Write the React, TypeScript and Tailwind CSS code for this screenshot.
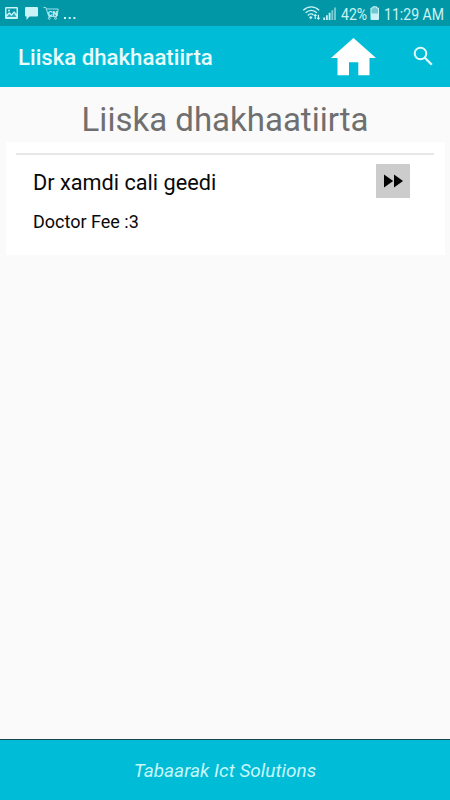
function StatusBar() {
  return (
    <div className="flex h-[26px] shrink-0 items-center justify-between bg-[#0297a7] text-[#c9f3f6]">
      <div className="flex h-full items-center">
        <svg className="ml-[5px] h-[26px] w-[75px]" viewBox="5 0 75 26" fill="none">
          <path fillRule="evenodd" fill="currentColor" d="M6.200 7h10.600A1.200 1.200 0 0 1 18 8.200v9.600a1.200 1.200 0 0 1-1.200 1.200H6.200A1.200 1.200 0 0 1 5 17.800V8.200A1.200 1.200 0 0 1 6.200 7Zm.3 1.500v6.300l2.700-2.800 2.300 2 2.600-3 2.400 3V8.500Z" />
          <path fill="#0297a7" d="m6.500 17 2.800-2.900 2.200 1.900 2.500-2.900 2.500 3.900Z" opacity=".75" />
          <circle cx="9" cy="10.500" r="1" fill="currentColor" />
          <path fill="currentColor" d="M26 7h11a1 1 0 0 1 1 1v7.500a1 1 0 0 1-1 1h-7.500L26.500 20v-3.500H26a1 1 0 0 1-1-1V8a1 1 0 0 1 1-1Z" />
          <path stroke="currentColor" strokeWidth=".8" d="M43.500 7.500h2.300l3 9H57M46.500 9H58.200l-1.200 7" />
          <circle cx="49.300" cy="18.300" r="1" stroke="currentColor" strokeWidth=".8" />
          <circle cx="55.500" cy="18.300" r="1" stroke="currentColor" strokeWidth=".8" />
          <text x="47.700" y="15.600" fontSize="7.500" fontWeight="900" fill="currentColor" textLength="10" lengthAdjust="spacingAndGlyphs">CN</text>
          <path fill="currentColor" d="M64 17h2v2h-2zM68.700 17h2v2h-2zM73.400 17h2v2h-2z" />
        </svg>
      </div>
      <div className="flex h-full items-center">
        <svg className="h-[26px] w-[39px]" viewBox="302 0 39 26" fill="none">
          <g stroke="currentColor" strokeWidth="1.400">
            <path d="M303.300 10.200c4.600-4.500 11.200-4.500 15.800 0" />
            <path d="M305.600 12.800c3.400-3.200 7.800-3.200 11.200 0" />
            <path d="M307.900 15.400c1.800-1.900 4.100-1.900 5.500-.5" />
          </g>
          <path fill="currentColor" d="m309 17.200 1.800-1.200 1.700 1.200-1.700 2.300Z" />
          <path fill="currentColor" d="m315.200 13.700 2 2.300h-1.400v3h-1.200v-3h-1.400ZM318.400 20l-2-2.300h1.400v-3h1.200v3h1.400Z" />
          <path fill="currentColor" d="M323.300 17.500h1.800V20h-1.800zM326 15.200h1.800V20H326zM328.700 12.800h1.800V20h-1.800z" />
          <path fill="currentColor" opacity=".6" d="M331.400 10.200h1.800V20h-1.800zM334.100 7.500h1.800V20h-1.800z" />
        </svg>
        <div className="w-[29px] pt-[3px] text-[16px] leading-none">
          <span className="inline-block origin-left scale-x-[.88] whitespace-nowrap">42%</span>
        </div>
        <svg className="h-[26px] w-[14px]" viewBox="370 0 14 26">
          <path fill="currentColor" opacity=".55" d="M372.500 6.500h4V8h2.200v6h-8V8h1.800Z" />
          <path fill="currentColor" d="M370.500 13.500h8.500V19a1 1 0 0 1-1 1h-6.500a1 1 0 0 1-1-1Z" />
          <path fill="none" stroke="currentColor" strokeWidth="1" d="M371 14V8h2V6.800h3.500V8h2v6" />
        </svg>
        <div className="w-[66px] pt-[3px] text-[16px] leading-none">
          <span className="inline-block origin-left scale-x-[.88] whitespace-nowrap">11:29 AM</span>
        </div>
      </div>
    </div>
  );
}

function AppBar() {
  return (
    <header className="flex h-[61px] shrink-0 items-center bg-[#00bcd6] pl-[18px] text-white">
      <h1 className="w-[313px] pt-[2px] text-[22.2px] font-medium leading-none whitespace-nowrap text-[#e9fdfe]">Liiska dhakhaatiirta</h1>
      <svg className="h-[38px] w-[45px]" viewBox="0 0 45 38" fill="currentColor">
        <path d="M22.500 0 45 20h-6.500v17.300H27.300V24.200h-9.300v13.100H6.500V20H0Z" />
      </svg>
      <svg className="mt-[-1px] ml-[37px] h-[20px] w-[20px]" viewBox="0 0 20 20" fill="none" stroke="#e2fbfd" strokeWidth="2">
        <circle cx="7.500" cy="7.500" r="5.800" />
        <path strokeWidth="2.300" d="m11.800 11.800 7 7" />
      </svg>
    </header>
  );
}

function DoctorCard() {
  return (
    <article className="ml-[6px] mr-[5px] h-[113px] bg-white pt-[11px] text-[#090909]">
      <div className="ml-[10px] mr-[11px] h-[2px] bg-[#e7e7e7]" />
      <div className="mt-[9px] flex h-[34px] items-center justify-between pl-[27px] pr-[35px]">
        <h3 className="pt-[3px] text-[21.7px] leading-none whitespace-nowrap">Dr xamdi cali geedi</h3>
        <button className="flex h-[34px] w-[34px] items-center justify-center bg-[#cccccc]" aria-label="Doctor details">
          <svg className="h-[14px] w-[20px]" viewBox="0 0 20 14" fill="#050505">
            <path d="M1 .6 10.200 7 1 13.400ZM11 .6 20 7l-9 6.400Z" />
          </svg>
        </button>
      </div>
      <p className="mt-[15px] pl-[27px] text-[18px] leading-none">Doctor Fee :3</p>
    </article>
  );
}

export default function App() {
  return (
    <div className="flex h-[800px] w-[450px] flex-col overflow-hidden bg-[#fafafa] font-[Roboto,sans-serif]">
      <StatusBar />
      <AppBar />
      <main className="flex-1">
        <h2 className="flex h-[55px] items-center justify-center pt-[9px] text-[33px] leading-none whitespace-nowrap text-[#6f6f6f]">Liiska dhakhaatiirta</h2>
        <DoctorCard />
      </main>
      <footer className="flex h-[61px] shrink-0 items-center justify-center border-t border-[#17454d] bg-[#00bcd6] pt-[2px] text-[19px] italic text-[#c9f8fb]">Tabaarak Ict Solutions</footer>
    </div>
  );
}
